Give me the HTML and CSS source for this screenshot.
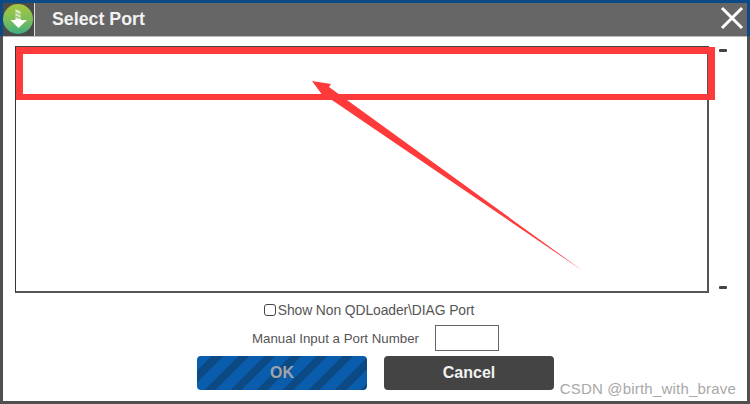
FILE: index.html
```html
<!DOCTYPE html>
<html>
<head>
<meta charset="utf-8">
<title>Select Port</title>
<link rel="stylesheet" href="styles.css">
</head>
<body>
<div class="window">
  <header class="titlebar">
    <div class="appicon">
      <svg width="31" height="33" viewBox="0 0 31 33">
        <defs>
          <linearGradient id="g" x1="0" y1="0" x2="0" y2="1">
            <stop offset="0" stop-color="#a5c63f"/>
            <stop offset="0.55" stop-color="#7cbd5a"/>
            <stop offset="1" stop-color="#3fae82"/>
          </linearGradient>
        </defs>
        <circle cx="15" cy="16" r="15" fill="url(#g)"/>
        <path d="M12.500 6l5 2.500V17h-5z" fill="#fff" opacity="0.7"/>
        <path d="M12.500 9.500l5 2.500M12.500 13l5 2.500" stroke="#8fbf55" stroke-width="1.200" fill="none"/>
        <path d="M12.500 16H18v1h6l-8.500 8L7.500 17h5z" fill="#fff"/>
      </svg>
    </div>
    <div class="title">Select Port</div>
    <svg class="close" width="24" height="24" viewBox="0 0 24 24">
      <path d="M2 2L22 22M22 2L2 22" stroke="#fff" stroke-width="3" fill="none"/>
    </svg>
  </header>
  <main class="body">
    <div class="listrow">
      <div class="listbox"></div>
      <div class="scroll">
        <span class="tick"></span>
        <span class="tick"></span>
      </div>
    </div>
    <label class="check"><span class="box"></span>Show Non QDLoader\DIAG Port</label>
    <div class="manual">
      <span>Manual Input a Port Number</span>
      <span class="portinput"></span>
    </div>
    <div class="buttons">
      <div class="btn ok">OK</div>
      <div class="btn cancel">Cancel</div>
    </div>
  </main>
  <div class="watermark">CSDN @birth_with_brave</div>
  <div class="redbox"></div>
  <svg class="arrow" width="750" height="404" viewBox="0 0 750 404">
    <path d="M583 271L329 87L331 84L312 81L323 96L326 96Z" fill="#ff3a3a"/>
  </svg>
</div>
</body>
</html>
```
FILE: styles.css
```css
* { box-sizing: border-box; }
html, body { margin: 0; padding: 0; }
body { width: 750px; height: 404px; overflow: hidden; background: #fff; font-family: "Liberation Sans", Arial, sans-serif; }
.window {
  position: relative;
  width: 750px;
  height: 404px;
  display: flex;
  flex-direction: column;
  background: #fff;
  border: 3px solid #555;
  border-image: linear-gradient(#0b4a86 36px, #505050 36px) 3;
}
.titlebar {
  height: 34px;
  flex: none;
  display: flex;
  align-items: center;
  background: #666;
  border-bottom: 1px solid #bbb;
}
.appicon { width: 32px; height: 33px; flex: none; background: #4a4a4a; border-right: 1px solid #ddd; margin-right: 17px; }
.appicon svg { display: block; }
.title { color: #f2f2f2; font-size: 17.8px; font-weight: bold; flex: 1; }
.close { margin-right: 3px; margin-top: -3px; }
.body { flex: 1; display: flex; flex-direction: column; align-items: center; padding: 9px 0 0 0; }
.listrow { align-self: stretch; display: flex; height: 247px; padding-left: 12px; }
.listbox { width: 694px; height: 247px; border-style: solid; border-color: #444 #555 #555 #333; border-width: 1px 2px 2px 1px; background: #fff; }
.scroll { flex: 1; display: flex; flex-direction: column; justify-content: space-between; align-items: flex-start; padding: 3px 0 4px 10px; }
.tick { width: 8px; height: 3px; background: #444; border-radius: 1px; }
.check { margin-top: 9px; margin-right: 12px; height: 16px; display: flex; align-items: center; font-size: 13.9px; color: #555; letter-spacing: -0.1px; }
.box { width: 12px; height: 12px; border: 1px solid #444; border-radius: 3px; background: #fff; margin-right: 2px; }
.manual { margin-top: 7px; margin-left: 1px; display: flex; align-items: center; font-size: 13.3px; color: #555; height: 26px; }
.portinput { width: 64px; height: 26px; border: 1px solid #666; margin-left: 16px; background: #fff; }
.buttons { margin-top: 5px; margin-left: 1px; display: flex; gap: 17px; }
.btn { width: 170px; height: 34px; border-radius: 4px; display: flex; align-items: center; justify-content: center; font-size: 16px; font-weight: bold; padding-bottom: 1px; }
.ok {
  color: #a0a4a8;
  background: repeating-linear-gradient(135deg, #0a5cad 0 10.500px, #0b4a85 10.500px 18.500px);
}
.cancel { background: #444; color: #f2f2f2; }
.watermark { position: absolute; right: 11px; bottom: 4px; font-size: 15px; color: #a8a8a8; letter-spacing: 0.2px; }
.redbox { position: absolute; left: 13px; top: 44px; width: 699px; height: 53px; border: 7px solid #ff3a3a; border-bottom-width: 6px; }
.arrow { position: absolute; left: -3px; top: -3px; pointer-events: none; }
```
